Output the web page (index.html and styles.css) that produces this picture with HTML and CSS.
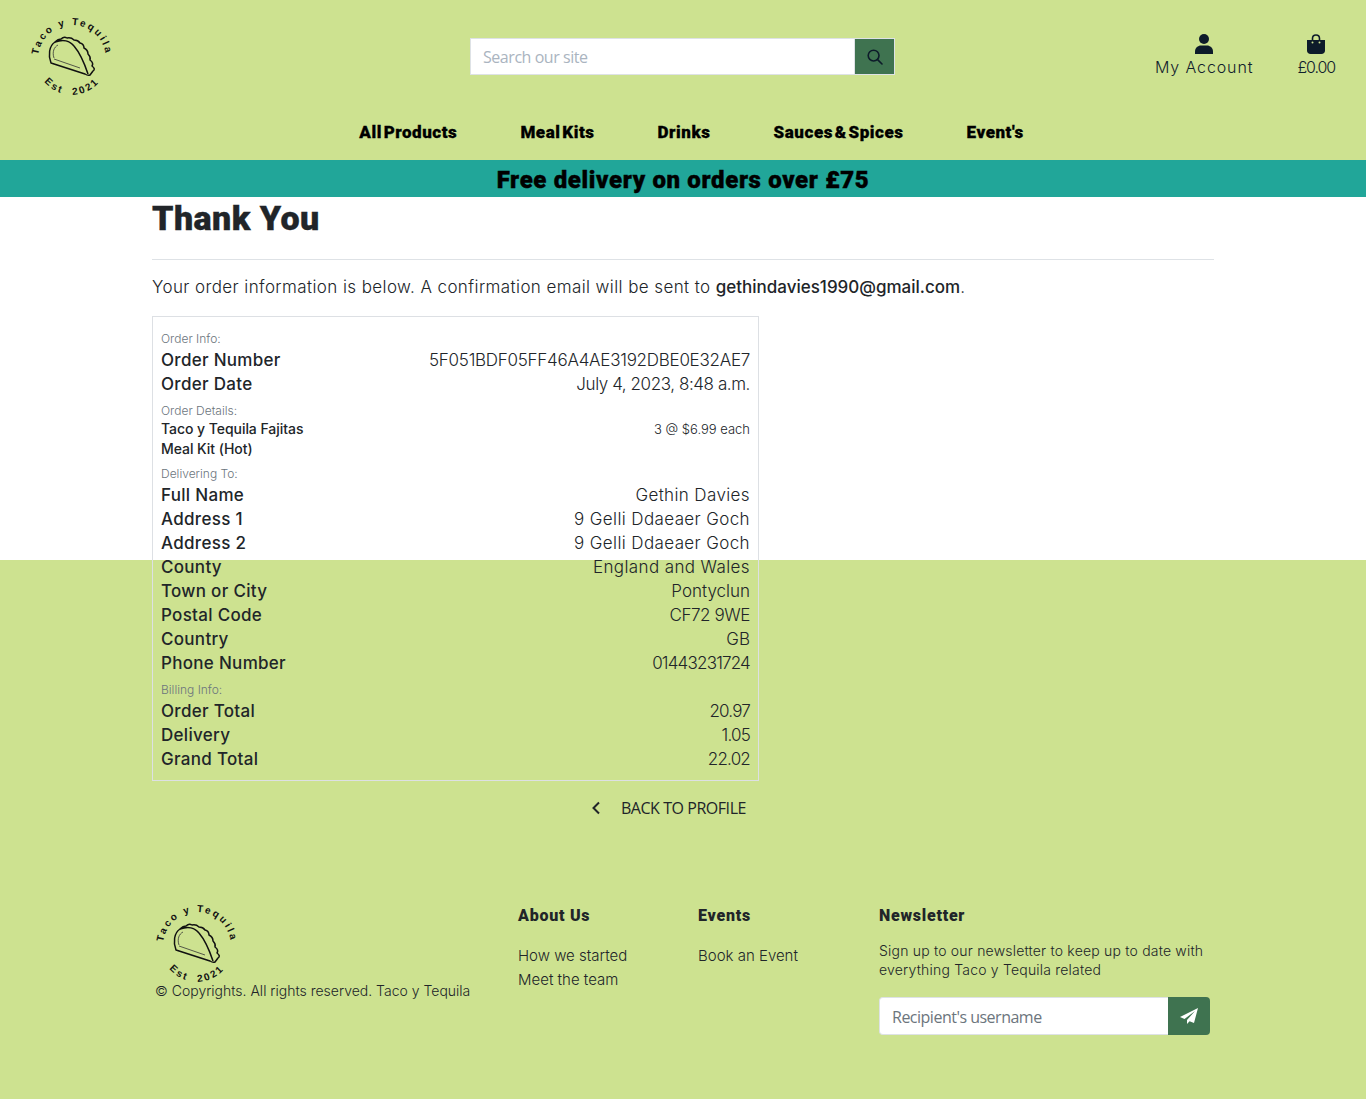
FILE: index.html
```html
<!DOCTYPE html>
<html lang="en">
<head>
    <meta charset="UTF-8">
    <meta name="viewport" content="width=device-width, initial-scale=1.0">
    <title>Taco y Tequila - Thank You</title>
    <link rel="stylesheet" href="styles.css">
</head>
<body>
    <header class="site-header">
        <div class="top-row">
            <a class="logo" href="#">
                <svg width="82" height="82" viewBox="0 0 82 82" fill="none">
                    <defs>
                        <path id="arc-top" d="M8 44 A34 34 0 0 1 76 44"></path>
                        <path id="arc-bottom" d="M11 62 A36 36 0 0 0 73 62"></path>
                    </defs>
                    <text class="logo-text"><textPath href="#arc-top" startOffset="50%">Taco y Tequila</textPath></text>
                    <text class="logo-text"><textPath href="#arc-bottom" startOffset="50%">Est&#160;&#160;2021</textPath></text>
                    <path class="taco-line" d="M21 48 C18 40 19 31 25 27 Q28 24 31 24 Q34 21 37 23 Q41 22 44 25 Q48 25 50 28 Q54 29 54 33 Q58 35 58 39 Q61 42 60 45 Q64 48 62 51 Q66 54 63 56 L60 60 Q58 61 55 59 Z"></path>
                    <path class="taco-line" d="M25 27 C33 24 40 26 44 31 C50 38 55 50 58 59"></path>
                    <path class="taco-thin" d="M24 43 C22 37 24 32 28 30 M24 44 L50 53"></path>
                </svg>
            </a>
            <form class="search-form">
                <input class="search-input" type="text" placeholder="Search our site">
                <button class="search-btn" type="button" aria-label="Search">
                    <svg width="16" height="16" viewBox="0 0 16 16" fill="none" stroke="#0d1b2a" stroke-width="1.6">
                        <circle cx="6.6" cy="6.6" r="5.4"></circle>
                        <path d="M10.6 10.6 L15 15" stroke-linecap="round"></path>
                    </svg>
                </button>
            </form>
            <div class="header-links">
                <a class="header-link account-link" href="#">
                    <svg width="18" height="20" viewBox="0 0 18 20" fill="#0d1b2a">
                        <circle cx="9" cy="5" r="5"></circle>
                        <path d="M0 20 V17.5 C0 13.8 3 11.5 6 11.5 H12 C15 11.5 18 13.8 18 17.5 V20 Z"></path>
                    </svg>
                    <span>My Account</span>
                </a>
                <a class="header-link bag-link" href="#">
                    <svg width="18" height="20" viewBox="0 0 18 20">
                        <path fill="none" stroke="#0d1b2a" stroke-width="1.6" d="M5.5 8 V4.5 C5.5 2.3 7 1 9 1 C11 1 12.5 2.3 12.5 4.5 V8"></path>
                        <path fill="#0d1b2a" d="M0 6 H18 V16.5 C18 18.5 16.5 20 14.5 20 H3.5 C1.5 20 0 18.5 0 16.5 Z"></path>
                        <circle cx="5.5" cy="8.6" r="1" fill="#cde290"></circle>
                        <circle cx="12.5" cy="8.6" r="1" fill="#cde290"></circle>
                    </svg>
                    <span>£0.00</span>
                </a>
            </div>
        </div>
        <nav class="main-nav">
            <a href="#">All Products</a>
            <a href="#">Meal Kits</a>
            <a href="#">Drinks</a>
            <a href="#">Sauces &amp; Spices</a>
            <a href="#">Event's</a>
        </nav>
    </header>

    <div class="delivery-banner">Free delivery on orders over £75</div>

    <main class="content">
        <h1 class="page-title">Thank You</h1>
        <hr class="title-rule">
        <p class="intro">Your order information is below. A confirmation email will be sent to <strong>gethindavies1990@gmail.com</strong>.</p>

        <div class="order-card">
            <p class="section-label first">Order Info:</p>
            <div class="row"><span class="label">Order Number</span><span class="hash">5F051BDF05FF46A4AE3192DBE0E32AE7</span></div>
            <div class="row"><span class="label">Order Date</span><span class="tight">July 4, 2023, 8:48 a.m.</span></div>

            <p class="section-label no-gap">Order Details:</p>
            <div class="row item-row">
                <span class="label">Taco y Tequila Fajitas<br>Meal Kit (Hot)</span>
                <span class="item-price">3 @ $6.99 each</span>
            </div>

            <p class="section-label">Delivering To:</p>
            <div class="row"><span class="label">Full Name</span><span class="wide">Gethin Davies</span></div>
            <div class="row"><span class="label">Address 1</span><span class="wide">9 Gelli Ddaeaer Goch</span></div>
            <div class="row"><span class="label">Address 2</span><span class="wide">9 Gelli Ddaeaer Goch</span></div>
            <div class="row"><span class="label">County</span><span class="wide">England and Wales</span></div>
            <div class="row"><span class="label">Town or City</span><span>Pontyclun</span></div>
            <div class="row"><span class="label">Postal Code</span><span class="tight">CF72 9WE</span></div>
            <div class="row"><span class="label">Country</span><span>GB</span></div>
            <div class="row"><span class="label">Phone Number</span><span class="num">01443231724</span></div>

            <p class="section-label">Billing Info:</p>
            <div class="row"><span class="label">Order Total</span><span class="num">20.97</span></div>
            <div class="row"><span class="label">Delivery</span><span class="num">1.05</span></div>
            <div class="row"><span class="label">Grand Total</span><span class="num">22.02</span></div>
        </div>

        <a class="back-link" href="#">
            <svg width="10" height="14" viewBox="0 0 10 14" fill="none" stroke="#212529" stroke-width="2">
                <path d="M8 1.5 L2.5 7 L8 12.5"></path>
            </svg>
            <span>BACK TO PROFILE</span>
        </a>
    </main>

    <footer class="site-footer">
        <div class="footer-brand">
            <svg width="82" height="82" viewBox="0 0 82 82" fill="none">
                <text class="logo-text"><textPath href="#arc-top" startOffset="50%">Taco y Tequila</textPath></text>
                <text class="logo-text"><textPath href="#arc-bottom" startOffset="50%">Est&#160;&#160;2021</textPath></text>
                <path class="taco-line" d="M21 48 C18 40 19 31 25 27 Q28 24 31 24 Q34 21 37 23 Q41 22 44 25 Q48 25 50 28 Q54 29 54 33 Q58 35 58 39 Q61 42 60 45 Q64 48 62 51 Q66 54 63 56 L60 60 Q58 61 55 59 Z"></path>
                <path class="taco-line" d="M25 27 C33 24 40 26 44 31 C50 38 55 50 58 59"></path>
                <path class="taco-thin" d="M24 43 C22 37 24 32 28 30 M24 44 L50 53"></path>
            </svg>
            <p class="copyright">© Copyrights. All rights reserved. Taco y Tequila</p>
        </div>
        <div class="footer-col about-col">
            <h5>About Us</h5>
            <a href="#">How we started</a>
            <a href="#">Meet the team</a>
        </div>
        <div class="footer-col events-col">
            <h5>Events</h5>
            <a href="#">Book an Event</a>
        </div>
        <div class="footer-col newsletter-col">
            <h5>Newsletter</h5>
            <p class="newsletter-text">Sign up to our newsletter to keep up to date with everything Taco y Tequila related</p>
            <form class="newsletter-form">
                <input class="newsletter-input" type="text" placeholder="Recipient's username">
                <button class="newsletter-btn" type="button" aria-label="Send">
                    <svg width="18" height="16" viewBox="0 0 18 16" fill="#fff">
                        <path d="M18 0 L0 9 L4.5 11 L15 3 L7 12 L7 16 L9.6 13.2 L14 15 Z"></path>
                    </svg>
                </button>
            </form>
        </div>
    </footer>
</body>
</html>
```

FILE: styles.css
```css
* {
    box-sizing: border-box;
}

body {
    margin: 0;
    min-height: 1099px;
    background-color: #cde290;
    color: #212529;
    font-family: "Inter", "Liberation Sans", sans-serif;
    font-size: 16px;
    font-weight: 300;
}

a {
    color: inherit;
    text-decoration: none;
}

/* header */
.top-row {
    display: flex;
    align-items: flex-start;
    height: 113px;
    padding: 15px 0 0 30px;
}

.logo {
    display: block;
    width: 82px;
    height: 82px;
}

.logo-text {
    fill: #111;
    font-family: "Liberation Sans", sans-serif;
    font-size: 10px;
    font-weight: 700;
    letter-spacing: 2.2px;
    text-anchor: middle;
}

.taco-line {
    stroke: #111;
    stroke-width: 1.5;
    stroke-linejoin: round;
}

.taco-thin {
    stroke: #333;
    stroke-width: 0.8;
}

.search-form {
    display: flex;
    width: 425px;
    height: 37px;
    margin: 23px 0 0 358px;
}

.search-input {
    flex: 1;
    min-width: 0;
    padding: 0 12px;
    border: 1px solid #dee2e6;
    border-right: none;
    background: #fff;
    font-family: "Open Sans", sans-serif;
    font-size: 16px;
    font-weight: 400;
    letter-spacing: -0.45px;
}

.search-input::placeholder {
    color: #aab4c0;
    opacity: 1;
}

.newsletter-input::placeholder {
    color: #6c757d;
    opacity: 1;
}

.search-btn {
    display: flex;
    align-items: center;
    justify-content: center;
    width: 41px;
    padding: 0;
    border: 1px solid #dee2e6;
    background-color: #3f7350;
}

.header-links {
    display: flex;
    margin-left: auto;
    padding: 19px 31px 0 0;
    gap: 44px;
}

.header-link {
    display: flex;
    flex-direction: column;
    align-items: center;
    gap: 2px;
    color: #10202c;
    font-size: 16px;
    line-height: 22px;
}

.account-link span {
    letter-spacing: 0.9px;
}

.bag-link span {
    letter-spacing: -1.1px;
}

.main-nav {
    display: flex;
    justify-content: center;
    align-items: center;
    gap: 63px;
    height: 47px;
    padding: 0 0 9px 17px;
    font-family: "Roboto", sans-serif;
    font-size: 17px;
    font-weight: 900;
    color: #000;
    letter-spacing: 0.55px;
    word-spacing: -3px;
    -webkit-text-stroke: 0.3px #000;
}

.delivery-banner {
    height: 37px;
    background-color: #21a699;
    color: #000;
    font-family: "Roboto", sans-serif;
    font-size: 24px;
    font-weight: 900;
    line-height: 41px;
    letter-spacing: 0.65px;
    text-align: center;
    -webkit-text-stroke: 0.4px #000;
}

/* main content - white block is shorter than what sits in it */
.content {
    height: 363px;
    padding: 0 152px;
    background-color: #fff;
}

.page-title {
    margin: 0;
    padding-top: 3px;
    font-family: "Roboto", sans-serif;
    font-size: 34px;
    font-weight: 900;
    line-height: 37px;
    letter-spacing: 0.45px;
    -webkit-text-stroke: 0.4px #212529;
}

.title-rule {
    margin: 22px 0 0;
    border: none;
    border-top: 1px solid #dee2e6;
}

.intro {
    margin: 16px 0 0;
    font-size: 17px;
    line-height: 23px;
    letter-spacing: 0.4px;
}

.intro strong {
    font-weight: 500;
    letter-spacing: 0;
}

.order-card {
    width: 607px;
    margin-top: 17px;
    padding: 12px 8px 9px;
    border: 1px solid #dde0e4;
}

.section-label {
    margin: 6px 0 1px;
    color: #6c757d;
    font-size: 12px;
    line-height: 17px;
}

.section-label.first {
    margin: 1px 0 1px;
}

.section-label.no-gap {
    margin-bottom: -1px;
}

.row {
    display: flex;
    justify-content: space-between;
    font-size: 17px;
    line-height: 24px;
}

.label {
    font-weight: 500;
    letter-spacing: 0.3px;
}

.hash {
    letter-spacing: -0.26px;
}

.tight {
    letter-spacing: -0.42px;
}

.wide {
    letter-spacing: 0.38px;
}

.num {
    letter-spacing: -0.8px;
}

.item-row {
    font-size: 14px;
    line-height: 20px;
    margin-top: 1px;
}

.item-row .label {
    letter-spacing: -0.05px;
}

.item-price {
    font-size: 13px;
}

.back-link {
    display: flex;
    align-items: center;
    width: 607px;
    justify-content: flex-end;
    gap: 20px;
    height: 24px;
    margin-top: 15px;
    padding-right: 13px;
    font-family: "Open Sans", sans-serif;
    font-size: 16px;
    font-weight: 400;
    letter-spacing: -0.45px;
}

/* footer */
.site-footer {
    display: flex;
    align-items: flex-start;
    margin-top: 342px;
    padding-left: 155px;
}

.footer-brand {
    width: 363px;
}

.footer-brand svg {
    display: block;
}

.copyright {
    margin: 0;
    font-size: 14px;
    line-height: 14px;
}

.footer-col {
    display: flex;
    flex-direction: column;
    align-items: flex-start;
    padding-top: 4px;
}

.footer-col h5 {
    margin: 0 0 18px;
    font-family: "Roboto", sans-serif;
    font-size: 16px;
    font-weight: 900;
    line-height: 20px;
    letter-spacing: 0.75px;
}

.footer-col a {
    font-size: 15px;
    line-height: 24px;
}

.about-col {
    width: 180px;
}

.events-col {
    width: 181px;
}

.newsletter-col {
    width: 331px;
}

.newsletter-text {
    margin: -3px 0 18px;
    font-size: 14px;
    line-height: 19px;
    letter-spacing: 0.2px;
}

.newsletter-form {
    display: flex;
    width: 100%;
    height: 38px;
}

.newsletter-input {
    flex: 1;
    min-width: 0;
    padding: 2px 12px 0;
    border: 1px solid #dee2e6;
    border-right: none;
    border-radius: 4px 0 0 4px;
    background: #fff;
    font-family: "Open Sans", sans-serif;
    font-size: 16px;
    font-weight: 400;
    letter-spacing: -0.5px;
}

.newsletter-btn {
    display: flex;
    align-items: center;
    justify-content: center;
    width: 42px;
    padding: 0;
    border: none;
    border-radius: 0 4px 4px 0;
    background-color: #3f7350;
}
```
